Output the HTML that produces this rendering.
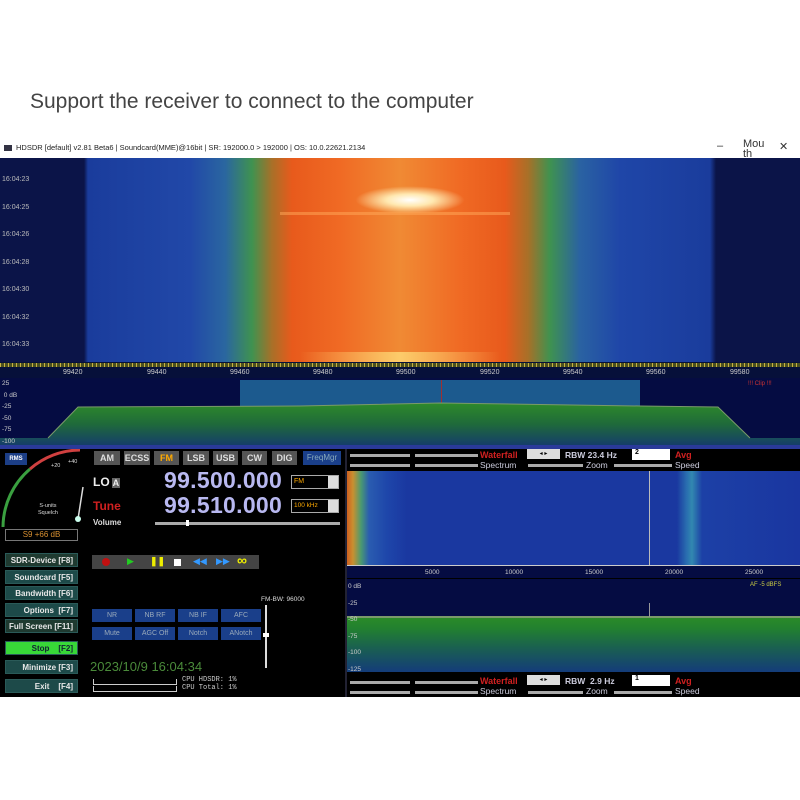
<!DOCTYPE html>
<html><head><meta charset="utf-8"><style>
*{margin:0;padding:0;box-sizing:border-box}
body{width:800px;height:800px;background:#fff;position:relative;overflow:hidden;font-family:"Liberation Sans",sans-serif}
.a{position:absolute}
.btn{position:absolute;background:#1d4a49;color:#e8e8e8;font-size:8px;font-weight:bold;height:14px;line-height:14px;text-align:right;padding-right:4px;border:1px solid #2a5a58}
.mode{position:absolute;top:451px;height:14px;background:#555;color:#ddd;font-size:9px;font-weight:bold;line-height:14px;text-align:center}
.bb{position:absolute;height:13px;background:#1a3f8a;color:#9ab;font-size:7px;line-height:13px;text-align:center;width:40px}
.sl{position:absolute;height:3px;background:#aaa}
</style></head><body>
<div class="a" style="left:30px;top:90px;font-size:21px;color:#444">Support the receiver to connect to the computer</div>

<div class="a" style="left:0;top:138px;width:800px;height:20px;background:#fff"></div>
<div class="a" style="left:4px;top:145px;width:8px;height:6px;background:#334"></div>
<div class="a" style="left:16px;top:143px;font-size:7.5px;color:#222;white-space:nowrap">HDSDR [default] v2.81 Beta6 | Soundcard(MME)@16bit | SR: 192000.0 &gt; 192000 | OS: 10.0.22621.2134</div>
<div class="a" style="left:717px;top:140px;font-size:11px;color:#333">–</div>
<div class="a" style="left:743px;top:139px;font-size:11px;color:#333;line-height:10px">Mou<br>th</div>
<div class="a" style="left:779px;top:140px;font-size:11px;color:#333">✕</div>

<div class="a" style="left:0;top:158px;width:800px;height:204px;background:linear-gradient(90deg,#0b1448 0,#0b1448 84px,#1a3c9c 88px,#2148a8 190px,#2a66a0 225px,#3f9250 252px,#a87028 272px,#e85a1c 292px,#f06a24 340px,#f08a34 400px,#f06a24 460px,#e85a1c 505px,#a87028 528px,#3f9250 550px,#2a62a2 580px,#1f46a8 620px,#1a3c9c 710px,#0b1448 716px,#0b1448 100%)"></div>
<div class="a" style="left:355px;top:186px;width:110px;height:28px;background:radial-gradient(ellipse at center,#fff 0,#ffe8b0 30%,rgba(240,140,60,0) 70%)"></div>
<div class="a" style="left:280px;top:212px;width:230px;height:3px;background:rgba(255,170,90,.5)"></div>
<div class="a" style="left:300px;top:352px;width:200px;height:10px;background:linear-gradient(90deg,rgba(255,200,90,0),rgba(255,220,120,.8),rgba(255,200,90,0))"></div>
<div class="a" style="left:2px;top:166px;font-size:7px;color:#bbb;line-height:27.5px">16:04:23<br>16:04:25<br>16:04:26<br>16:04:28<br>16:04:30<br>16:04:32<br>16:04:33</div>

<div class="a" style="left:0;top:362px;width:800px;height:16px;background:#06103a"></div>
<div class="a" style="left:0;top:363px;width:800px;height:4px;background:repeating-linear-gradient(90deg,#c8b040 0 1px,#4a5020 1px 4px)"></div>
<div class="a" style="left:0;top:369px;width:800px;font-size:7px;color:#ccc">
<span class="a" style="left:63px">99420</span><span class="a" style="left:147px">99440</span><span class="a" style="left:230px">99460</span><span class="a" style="left:313px">99480</span><span class="a" style="left:396px">99500</span><span class="a" style="left:480px">99520</span><span class="a" style="left:563px">99540</span><span class="a" style="left:646px">99560</span><span class="a" style="left:730px">99580</span></div>

<div class="a" style="left:0;top:378px;width:800px;height:67px;background:#050c42"></div>
<div class="a" style="left:240px;top:380px;width:400px;height:32px;background:#1c5a8e"></div>
<div class="a" style="left:441px;top:380px;width:1px;height:40px;background:#a03030"></div>
<svg class="a" style="left:0;top:378px" width="800" height="67"><defs><linearGradient id="g" x1="0" y1="0" x2="0" y2="1"><stop offset="0" stop-color="#2e8a2a"/><stop offset="0.5" stop-color="#1f6a3a"/><stop offset="1" stop-color="#153e6a"/></linearGradient></defs><path d="M0 67 L0 60 L48 60 L78 29 L300 28 L440 25 L640 28 L718 29 L750 60 L800 60 L800 67Z" fill="url(#g)"/><path d="M48 60 L78 29 L300 28 L440 25 L640 28 L718 29 L750 60" fill="none" stroke="#7a9a6a" stroke-width="1"/></svg>
<div class="a" style="left:2px;top:378px;font-size:6.5px;color:#ccc;line-height:11.5px">25<br>&nbsp;0 dB<br>-25<br>-50<br>-75<br>-100</div>
<div class="a" style="left:748px;top:381px;font-size:6px;color:#c33">!!! Clip !!!</div>
<div class="a" style="left:0;top:445px;width:800px;height:4px;background:#2a3a9a"></div>

<div class="a" style="left:0;top:449px;width:800px;height:248px;background:#000"></div>

<div class="a" style="left:5px;top:453px;width:22px;height:12px;background:#1c3e86;color:#fff;font-size:6px;font-weight:bold;line-height:12px;text-align:center">RMS</div>
<svg class="a" style="left:0;top:449px" width="90" height="90"><path d="M3 78 A77 77 0 0 1 30 20" fill="none" stroke="#3aa040" stroke-width="3"/><path d="M30 20 A77 77 0 0 1 80 1" fill="none" stroke="#d04040" stroke-width="3"/><line x1="83" y1="38" x2="78" y2="70" stroke="#ddd" stroke-width="1.5"/><circle cx="78" cy="70" r="3" fill="#cfe"/></svg>
<div class="a" style="left:38px;top:503px;font-size:5.5px;color:#ddd;text-align:center;line-height:7px">S-units<br>Squelch</div>
<div class="a" style="left:51px;top:463px;font-size:5.5px;color:#ddd">+20</div>
<div class="a" style="left:68px;top:459px;font-size:5.5px;color:#ddd">+40</div>
<div class="a" style="left:5px;top:529px;width:73px;height:12px;border:1px solid #777;color:#d89030;font-size:8px;line-height:10px;text-align:center">S9 +66 dB</div>

<div class="btn" style="left:5px;top:553px;width:73px;background:#1f3a30">SDR-Device [F8]</div>
<div class="btn" style="left:5px;top:570px;width:73px">Soundcard [F5]</div>
<div class="btn" style="left:5px;top:586px;width:73px">Bandwidth [F6]</div>
<div class="btn" style="left:5px;top:603px;width:73px">Options &nbsp;[F7]</div>
<div class="btn" style="left:5px;top:619px;width:73px;background:#1f3a30">Full Screen [F11]</div>
<div class="btn" style="left:5px;top:641px;width:73px;background:#38d838;color:#123">Stop &nbsp;&nbsp;&nbsp;[F2]</div>
<div class="btn" style="left:5px;top:660px;width:73px">Minimize [F3]</div>
<div class="btn" style="left:5px;top:679px;width:73px">Exit &nbsp;&nbsp;&nbsp;[F4]</div>

<div class="mode" style="left:94px;width:26px">AM</div>
<div class="mode" style="left:124px;width:26px">ECSS</div>
<div class="mode" style="left:154px;width:25px;color:#fa0">FM</div>
<div class="mode" style="left:183px;width:26px">LSB</div>
<div class="mode" style="left:213px;width:25px">USB</div>
<div class="mode" style="left:242px;width:25px">CW</div>
<div class="mode" style="left:272px;width:25px">DIG</div>
<div class="mode" style="left:303px;width:38px;background:#1a3f8a;color:#8ab;font-weight:normal;font-size:8px">FreqMgr</div>

<div class="a" style="left:93px;top:475px;font-size:12px;font-weight:bold;color:#eee">LO<span style="background:#666;font-size:9px;margin-left:2px;padding:0 1px">A</span></div>
<div class="a" style="left:93px;top:499px;font-size:12px;font-weight:bold;color:#d02020">Tune</div>
<div class="a" style="left:93px;top:518px;font-size:8px;font-weight:bold;color:#ddd">Volume</div>
<div class="a" style="left:164px;top:467px;font-size:23px;font-weight:bold;color:#b8b8f0;letter-spacing:0.3px">99.500.000</div>
<div class="a" style="left:164px;top:492px;font-size:23px;font-weight:bold;color:#b8b8f0;letter-spacing:0.3px">99.510.000</div>
<div class="a" style="left:291px;top:475px;width:48px;height:14px;border:1px solid #aaa;background:#000;color:#fa0;font-size:7px;line-height:12px;padding-left:2px">FM<span style="float:right;background:#ddd;width:10px;height:12px"></span></div>
<div class="a" style="left:291px;top:499px;width:48px;height:14px;border:1px solid #aaa;background:#000;color:#fa0;font-size:6.5px;line-height:12px;padding-left:2px">100 kHz<span style="float:right;background:#ddd;width:10px;height:12px"></span></div>
<div class="sl" style="left:155px;top:522px;width:185px"></div>
<div class="a" style="left:186px;top:520px;width:3px;height:6px;background:#fff"></div>

<div class="a" style="left:92px;top:555px;width:167px;height:14px;background:#444"></div>
<div class="a" style="left:102px;top:558px;width:8px;height:8px;border-radius:50%;background:#c01010"></div>
<div class="a" style="left:127px;top:556px;font-size:9px;color:#2c2">▶</div>
<div class="a" style="left:150px;top:556px;font-size:9px;color:#ee0;font-weight:bold">❚❚</div>
<div class="a" style="left:174px;top:559px;width:7px;height:7px;background:#fff"></div>
<div class="a" style="left:193px;top:556px;font-size:9px;color:#39f">◀◀</div>
<div class="a" style="left:216px;top:556px;font-size:9px;color:#39f">▶▶</div>
<div class="a" style="left:237px;top:552px;font-size:14px;color:#ee0;font-weight:bold">∞</div>

<div class="a" style="left:261px;top:596px;font-size:6.5px;color:#ddd">FM-BW: 96000</div>
<div class="a" style="left:265px;top:605px;width:2px;height:63px;background:#ddd"></div>
<div class="a" style="left:263px;top:633px;width:6px;height:4px;background:#fff"></div>
<div class="bb" style="left:92px;top:609px">NR</div>
<div class="bb" style="left:135px;top:609px">NB RF</div>
<div class="bb" style="left:178px;top:609px">NB IF</div>
<div class="bb" style="left:221px;top:609px">AFC</div>
<div class="bb" style="left:92px;top:627px">Mute</div>
<div class="bb" style="left:135px;top:627px">AGC Off</div>
<div class="bb" style="left:178px;top:627px">Notch</div>
<div class="bb" style="left:221px;top:627px">ANotch</div>
<div class="a" style="left:90px;top:659px;font-size:13px;color:#4a8a3a">2023/10/9 16:04:34</div>
<div class="a" style="left:93px;top:679px;width:84px;height:6px;border:1px solid #ccc;border-top:none"></div>
<div class="a" style="left:93px;top:686px;width:84px;height:6px;border:1px solid #ccc;border-top:none"></div>
<div class="a" style="left:182px;top:677px;font-family:'Liberation Mono',monospace;font-size:7px;color:#ccc;line-height:7.5px">CPU HDSDR: 1%<br>CPU Total: 1%</div>

<div class="a" style="left:345px;top:449px;width:2px;height:248px;background:#223"></div>
<div class="sl" style="left:350px;top:454px;width:60px"></div><div class="sl" style="left:415px;top:454px;width:63px"></div>
<div class="sl" style="left:350px;top:464px;width:60px"></div><div class="sl" style="left:415px;top:464px;width:63px"></div>
<div class="sl" style="left:528px;top:464px;width:55px"></div><div class="sl" style="left:614px;top:464px;width:58px"></div>
<div class="a" style="left:480px;top:450px;font-size:9px;font-weight:bold;color:#d02020">Waterfall</div>
<div class="a" style="left:527px;top:449px;width:33px;height:10px;background:#ddd;font-size:6px;color:#000;text-align:center;line-height:10px">◂ ▸</div>
<div class="a" style="left:565px;top:450px;font-size:8.5px;color:#ccd;font-weight:bold">RBW 23.4 Hz</div>
<div class="a" style="left:632px;top:449px;width:38px;height:11px;background:#fff;font-size:7px;font-weight:bold;padding-left:3px">2</div>
<div class="a" style="left:675px;top:450px;font-size:9px;font-weight:bold;color:#d02020">Avg</div>
<div class="a" style="left:480px;top:460px;font-size:8.5px;color:#ccd">Spectrum</div>
<div class="a" style="left:586px;top:460px;font-size:8.5px;color:#ccd">Zoom</div>
<div class="a" style="left:675px;top:460px;font-size:8.5px;color:#ccd">Speed</div>

<div class="a" style="left:347px;top:471px;width:453px;height:94px;background:linear-gradient(90deg,#d06020 0,#c89030 6px,#4a9a70 14px,#2a5cb0 22px,#1e46aa 40px,#1a38a0 60px,#1a38a0 330px,#2a70b0 340px,#3288b0 345px,#1c40a6 355px,#1a36a0 100%)"></div>
<div class="a" style="left:649px;top:471px;width:1px;height:107px;background:#bbb"></div>
<div class="a" style="left:347px;top:565px;width:453px;height:13px;background:#050c42;border-top:1px solid #ccc"></div>
<div class="a" style="left:347px;top:569px;width:453px;font-size:6.5px;color:#ccc"><span class="a" style="left:78px">5000</span><span class="a" style="left:158px">10000</span><span class="a" style="left:238px">15000</span><span class="a" style="left:318px">20000</span><span class="a" style="left:398px">25000</span></div>

<div class="a" style="left:347px;top:579px;width:453px;height:93px;background:#050c42"></div>
<div class="a" style="left:347px;top:618px;width:453px;height:54px;background:linear-gradient(180deg,#2a8a28 0,#228030 20%,#1a6050 55%,#143c7a 100%)"></div>
<div class="a" style="left:347px;top:616px;width:453px;height:2px;background:#7a9a6a"></div>
<div class="a" style="left:649px;top:603px;width:1px;height:14px;background:#999"></div>
<div class="a" style="left:348px;top:579px;font-size:6.5px;color:#ccc;line-height:16.6px">0 dB<br>-25<br>-50<br>-75<br>-100<br>-125</div>
<div class="a" style="left:750px;top:582px;font-size:6px;color:#cc4">AF -5 dBFS</div>

<div class="sl" style="left:350px;top:681px;width:60px"></div><div class="sl" style="left:415px;top:681px;width:63px"></div>
<div class="sl" style="left:350px;top:691px;width:60px"></div><div class="sl" style="left:415px;top:691px;width:63px"></div>
<div class="sl" style="left:528px;top:691px;width:55px"></div><div class="sl" style="left:614px;top:691px;width:58px"></div>
<div class="a" style="left:480px;top:676px;font-size:9px;font-weight:bold;color:#d02020">Waterfall</div>
<div class="a" style="left:527px;top:675px;width:33px;height:10px;background:#ddd;font-size:6px;color:#000;text-align:center;line-height:10px">◂ ▸</div>
<div class="a" style="left:565px;top:676px;font-size:8.5px;color:#ccd;font-weight:bold">RBW &nbsp;2.9 Hz</div>
<div class="a" style="left:632px;top:675px;width:38px;height:11px;background:#fff;font-size:7px;font-weight:bold;padding-left:3px">1</div>
<div class="a" style="left:675px;top:676px;font-size:9px;font-weight:bold;color:#d02020">Avg</div>
<div class="a" style="left:480px;top:686px;font-size:8.5px;color:#ccd">Spectrum</div>
<div class="a" style="left:586px;top:686px;font-size:8.5px;color:#ccd">Zoom</div>
<div class="a" style="left:675px;top:686px;font-size:8.5px;color:#ccd">Speed</div>
</body></html>
